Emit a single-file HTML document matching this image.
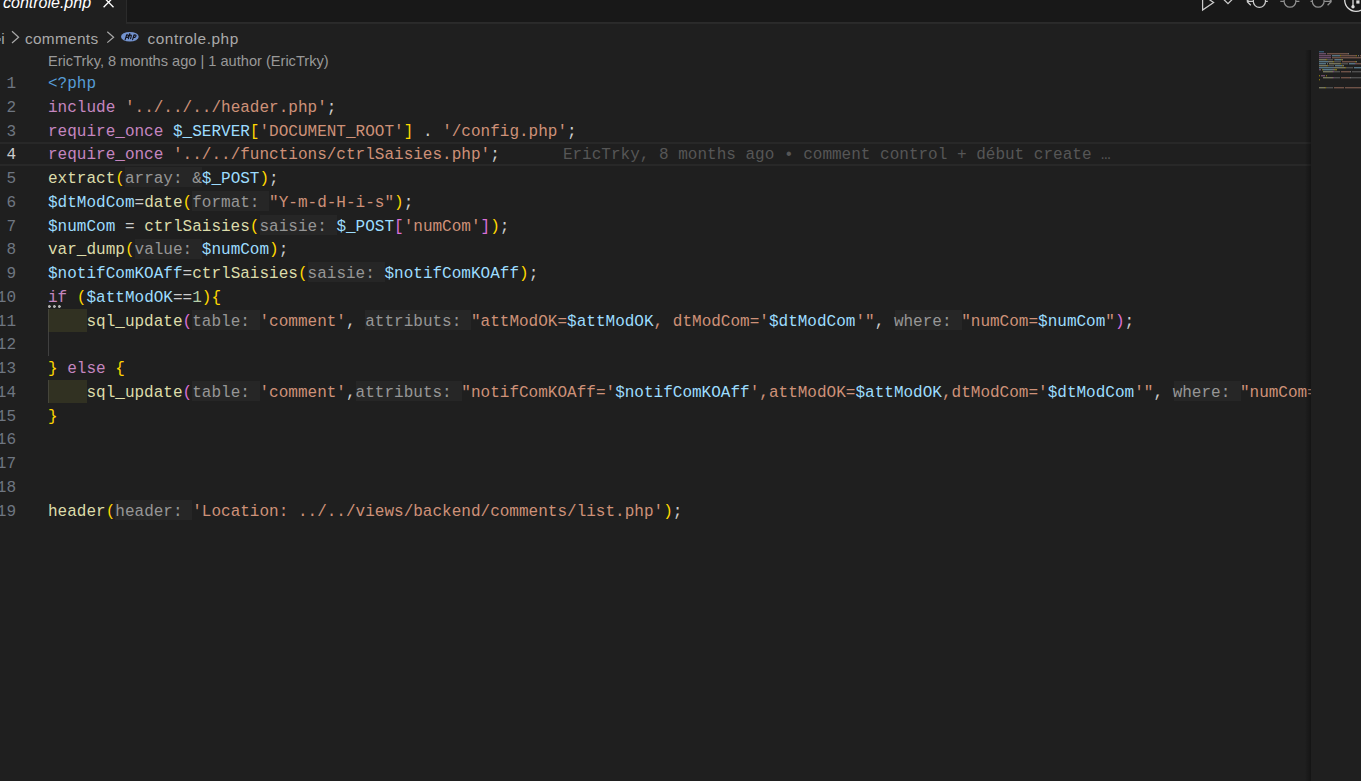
<!DOCTYPE html>
<html><head><meta charset="utf-8">
<style>
*{margin:0;padding:0;box-sizing:border-box}
html,body{width:1361px;height:781px;overflow:hidden;background:#1f1f1f}
body{position:relative;font-family:"Liberation Sans",sans-serif}
.ico{position:absolute;left:0;top:0;overflow:visible}
.tabs{position:absolute;left:0;top:0;width:1361px;height:23px;background:#181818}
.tabline{position:absolute;left:126px;top:22px;width:1235px;height:2px;background:linear-gradient(#2b2b2b 0 1px,#292929 1px 2px)}
.tab{position:absolute;left:0;top:0;width:127px;height:23px;background:#1f1f1f;border-right:1px solid #2b2b2b}
.tabtxt{position:absolute;left:3px;top:-6.8px;font-size:16px;font-style:italic;color:#ffffff;white-space:nowrap;line-height:20px}
.bc{position:absolute;top:29.5px;font-size:15.4px;color:#a9a9a9;white-space:nowrap;line-height:18px}
.codelens{position:absolute;left:48px;top:52px;font-size:14.6px;color:#999999;white-space:nowrap;line-height:18px}
.ln{position:absolute;left:-84px;width:100px;text-align:right;font-family:"Liberation Mono",monospace;font-size:16.03px;line-height:20.0px;white-space:nowrap}
.editor{position:absolute;left:0;top:47px;width:1311px;height:734px;overflow:hidden}
.editor > div{margin-top:-47px}
.cl{position:absolute;left:48px;font-family:"Liberation Mono",monospace;font-size:16.03px;line-height:20.0px;white-space:pre;color:#cccccc}
.h{color:#969696}
.hintbg{position:absolute;height:20px;background:#262626}
.ind{position:absolute;height:22.9px;background:#313122;border-left:1px solid #45453a}
.guide{position:absolute;left:48px;width:1px;background:#404040}
.hl{position:absolute;left:0;top:142px;width:1311px;height:24px;border-top:2px solid #282828;border-bottom:2px solid #282828}
.blame{position:absolute;left:562.9px;font-family:"Liberation Mono",monospace;font-size:16.03px;line-height:20.0px;color:#565656;white-space:pre}
.shadow{position:absolute;left:1305px;top:50px;width:6px;height:731px;background:linear-gradient(to right,rgba(0,0,0,0),rgba(0,0,0,0.35))}
.mm{position:absolute;left:1319px;top:51px;width:42px;height:60px;overflow:hidden;opacity:.45}
.mm i{position:absolute;height:2px;display:block;border-bottom:0.5px solid rgba(31,31,31,.6)}
.dots{position:absolute;left:47.8px;top:304.6px;width:13.5px;height:3.3px;background:radial-gradient(circle at 1.4px 1.65px,#b0b0b0 0 1.2px,rgba(176,176,176,0) 1.7px) 0 0/5px 3.3px repeat-x}
</style></head><body>
<div class="tabs"></div>
<div class="tabline"></div>
<div class="tab"><div class="tabtxt">controle.php</div></div>
<svg class="ico" width="1361" height="23" viewBox="0 0 1361 23">
<g fill="none" stroke="#ffffff" stroke-width="1.3">
<path d="M103.6 7.2 L113.5 -2.8 M113.5 7.2 L103.6 -2.8"/>
</g>
<g fill="none" stroke="#cccccc" stroke-width="1.25" stroke-linejoin="miter">
<path d="M1202.6 -5 L1213.6 2.5 L1202.6 10 Z"/>
<path d="M1223.8 -0.5 L1228 3.7 L1232.2 -0.5"/>
<circle cx="1259.4" cy="1.3" r="6.1"/>
<path d="M1246.8 1.3 H1253.3 M1265.5 1.3 H1267.8 M1246.8 1.3 L1250.8 -2.7 M1246.8 1.3 L1250.8 5.3"/>
</g>
<g fill="none" stroke="#8f8f8f" stroke-width="1.25">
<circle cx="1290" cy="1.3" r="5.9"/>
<path d="M1280.3 1.3 H1284.1 M1295.9 1.3 H1299.4"/>
<circle cx="1318.2" cy="1.3" r="5.9"/>
<path d="M1310.5 1.3 H1312.3 M1324.1 1.3 H1331.6 M1331.6 1.3 L1327.6 -2.7 M1331.6 1.3 L1327.6 5.3"/>
</g>
<g fill="none" stroke="#dddddd" stroke-width="1.3">
<circle cx="1356" cy="0" r="11.3"/>
<path d="M1353 -2 V6"/>
</g>
<g fill="#dddddd">
<circle cx="1353" cy="6.8" r="1.7"/>
<rect x="1356.3" y="0.4" width="3.2" height="3.2"/>
</g>
</svg>
<div class="bc" style="left:1.3px">i</div><div style="position:absolute;left:0;top:38px;width:1px;height:3px;background:#6a6a6a"></div>
<div class="bc" style="left:25px;letter-spacing:0.3px">comments</div>
<div class="bc" style="left:147.5px;letter-spacing:0.55px">controle.php</div>
<svg class="ico" width="300" height="50" viewBox="0 0 300 50">
<g fill="none" stroke="#a9a9a9" stroke-width="1.2">
<path d="M12 31.3 L18.6 37.2 L12 43"/>
<path d="M107.3 31.8 L113.6 37.2 L107.3 42.6"/>
</g>
<ellipse cx="129.85" cy="36.75" rx="8.85" ry="4.85" fill="#7393cf"/>
<g fill="none" stroke="#101018" stroke-width="1.1" stroke-linecap="round">
<path d="M125.2 39.6 L126.6 34.9 M126.4 35.6 C127.4 34.6 128.9 34.7 128.6 36.0 C128.3 37.2 127.2 37.6 126.1 37.3"/>
<path d="M129.8 33.6 L128.4 38.6 M129.0 36.2 C129.8 35.0 131.6 34.6 131.3 35.8 L130.6 38.6"/>
<path d="M132.6 39.6 L134.0 34.9 M133.8 35.6 C134.8 34.6 136.3 34.7 136.0 36.0 C135.7 37.2 134.6 37.6 133.5 37.3"/>
</g>
</svg>
<div class="codelens">EricTrky, 8 months ago | 1 author (EricTrky)</div>
<div class="hl"></div>
<div class="guide" style="top:332.00px;height:23.75px"></div>
<div class="editor"><div style="position:absolute;left:0;top:0;width:1306px;height:781px">
<div class="ln" style="top:74.03px;color:#6E7681">1</div>
<div class="cl" style="top:74.03px"><span style="color:#569CD6">&lt;?php</span></div>
<div class="ln" style="top:97.78px;color:#6E7681">2</div>
<div class="cl" style="top:97.78px"><span style="color:#C586C0">include</span><span style="color:#CCCCCC">&nbsp;</span><span style="color:#CE9178">&#x27;../../../header.php&#x27;</span><span style="color:#CCCCCC">;</span></div>
<div class="ln" style="top:121.53px;color:#6E7681">3</div>
<div class="cl" style="top:121.53px"><span style="color:#C586C0">require_once</span><span style="color:#CCCCCC">&nbsp;</span><span style="color:#9CDCFE">$_SERVER</span><span style="color:#FFD700">[</span><span style="color:#CE9178">&#x27;DOCUMENT_ROOT&#x27;</span><span style="color:#FFD700">]</span><span style="color:#CCCCCC">&nbsp;.&nbsp;</span><span style="color:#CE9178">&#x27;/config.php&#x27;</span><span style="color:#CCCCCC">;</span></div>
<div class="ln" style="top:145.28px;color:#CCCCCC">4</div>
<div class="cl" style="top:145.28px"><span style="color:#C586C0">require_once</span><span style="color:#CCCCCC">&nbsp;</span><span style="color:#CE9178">&#x27;../../functions/ctrlSaisies.php&#x27;</span><span style="color:#CCCCCC">;</span></div>
<div class="ln" style="top:169.03px;color:#6E7681">5</div>
<div class="hintbg" style="top:167.25px;left:124.96px;width:76.96px"></div>
<div class="cl" style="top:169.03px"><span style="color:#DCDCAA">extract</span><span style="color:#FFD700">(</span><span class="h">array:&nbsp;&amp;</span><span style="color:#9CDCFE">$_POST</span><span style="color:#FFD700">)</span><span style="color:#CCCCCC">;</span></div>
<div class="ln" style="top:192.78px;color:#6E7681">6</div>
<div class="hintbg" style="top:191.00px;left:192.30px;width:76.96px"></div>
<div class="cl" style="top:192.78px"><span style="color:#9CDCFE">$dtModCom</span><span style="color:#CCCCCC">=</span><span style="color:#DCDCAA">date</span><span style="color:#FFD700">(</span><span class="h">format:&nbsp;</span><span style="color:#CE9178">&quot;Y-m-d-H-i-s&quot;</span><span style="color:#FFD700">)</span><span style="color:#CCCCCC">;</span></div>
<div class="ln" style="top:216.53px;color:#6E7681">7</div>
<div class="hintbg" style="top:214.75px;left:259.64px;width:76.96px"></div>
<div class="cl" style="top:216.53px"><span style="color:#9CDCFE">$numCom</span><span style="color:#CCCCCC">&nbsp;=&nbsp;</span><span style="color:#DCDCAA">ctrlSaisies</span><span style="color:#FFD700">(</span><span class="h">saisie:&nbsp;</span><span style="color:#9CDCFE">$_POST</span><span style="color:#DA70D6">[</span><span style="color:#CE9178">&#x27;numCom&#x27;</span><span style="color:#DA70D6">]</span><span style="color:#FFD700">)</span><span style="color:#CCCCCC">;</span></div>
<div class="ln" style="top:240.28px;color:#6E7681">8</div>
<div class="hintbg" style="top:238.50px;left:134.58px;width:67.34px"></div>
<div class="cl" style="top:240.28px"><span style="color:#DCDCAA">var_dump</span><span style="color:#FFD700">(</span><span class="h">value:&nbsp;</span><span style="color:#9CDCFE">$numCom</span><span style="color:#FFD700">)</span><span style="color:#CCCCCC">;</span></div>
<div class="ln" style="top:264.03px;color:#6E7681">9</div>
<div class="hintbg" style="top:262.25px;left:307.74px;width:76.96px"></div>
<div class="cl" style="top:264.03px"><span style="color:#9CDCFE">$notifComKOAff</span><span style="color:#CCCCCC">=</span><span style="color:#DCDCAA">ctrlSaisies</span><span style="color:#FFD700">(</span><span class="h">saisie:&nbsp;</span><span style="color:#9CDCFE">$notifComKOAff</span><span style="color:#FFD700">)</span><span style="color:#CCCCCC">;</span></div>
<div class="ln" style="top:287.78px;color:#6E7681">10</div>
<div class="cl" style="top:287.78px"><span style="color:#C586C0">if</span><span style="color:#CCCCCC">&nbsp;</span><span style="color:#FFD700">(</span><span style="color:#9CDCFE">$attModOK</span><span style="color:#CCCCCC">==</span><span style="color:#B5CEA8">1</span><span style="color:#FFD700">)</span><span style="color:#FFD700">{</span></div>
<div class="ln" style="top:311.53px;color:#6E7681">11</div>
<div class="ind" style="top:309.00px;left:47.70px;width:39.28px"></div>
<div class="hintbg" style="top:309.75px;left:192.30px;width:67.34px"></div>
<div class="hintbg" style="top:309.75px;left:365.46px;width:105.82px"></div>
<div class="hintbg" style="top:309.75px;left:894.56px;width:67.34px"></div>
<div class="cl" style="top:311.53px">&nbsp;&nbsp;&nbsp;&nbsp;<span style="color:#DCDCAA">sql_update</span><span style="color:#DA70D6">(</span><span class="h">table:&nbsp;</span><span style="color:#CE9178">&#x27;comment&#x27;</span><span style="color:#CCCCCC">,&nbsp;</span><span class="h">attributs:&nbsp;</span><span style="color:#CE9178">&quot;attModOK=</span><span style="color:#9CDCFE">$attModOK</span><span style="color:#CE9178">,&nbsp;dtModCom=&#x27;</span><span style="color:#9CDCFE">$dtModCom</span><span style="color:#CE9178">&#x27;&quot;</span><span style="color:#CCCCCC">,&nbsp;</span><span class="h">where:&nbsp;</span><span style="color:#CE9178">&quot;numCom=</span><span style="color:#9CDCFE">$numCom</span><span style="color:#CE9178">&quot;</span><span style="color:#DA70D6">)</span><span style="color:#CCCCCC">;</span></div>
<div class="ln" style="top:335.28px;color:#6E7681">12</div>
<div class="cl" style="top:335.28px"></div>
<div class="ln" style="top:359.03px;color:#6E7681">13</div>
<div class="cl" style="top:359.03px"><span style="color:#FFD700">}</span><span style="color:#CCCCCC">&nbsp;</span><span style="color:#C586C0">else</span><span style="color:#CCCCCC">&nbsp;</span><span style="color:#FFD700">{</span></div>
<div class="ln" style="top:382.78px;color:#6E7681">14</div>
<div class="ind" style="top:380.25px;left:47.70px;width:39.28px"></div>
<div class="hintbg" style="top:381.00px;left:192.30px;width:67.34px"></div>
<div class="hintbg" style="top:381.00px;left:355.84px;width:105.82px"></div>
<div class="hintbg" style="top:381.00px;left:1173.54px;width:67.34px"></div>
<div class="cl" style="top:382.78px">&nbsp;&nbsp;&nbsp;&nbsp;<span style="color:#DCDCAA">sql_update</span><span style="color:#DA70D6">(</span><span class="h">table:&nbsp;</span><span style="color:#CE9178">&#x27;comment&#x27;</span><span style="color:#CCCCCC">,</span><span class="h">attributs:&nbsp;</span><span style="color:#CE9178">&quot;notifComKOAff=&#x27;</span><span style="color:#9CDCFE">$notifComKOAff</span><span style="color:#CE9178">&#x27;</span><span style="color:#CE9178">,attModOK=</span><span style="color:#9CDCFE">$attModOK</span><span style="color:#CE9178">,dtModCom=&#x27;</span><span style="color:#9CDCFE">$dtModCom</span><span style="color:#CE9178">&#x27;&quot;</span><span style="color:#CCCCCC">,&nbsp;</span><span class="h">where:&nbsp;</span><span style="color:#CE9178">&quot;numCom=</span><span style="color:#9CDCFE">$numCom</span><span style="color:#CE9178">&quot;</span><span style="color:#DA70D6">)</span><span style="color:#CCCCCC">;</span></div>
<div class="ln" style="top:406.53px;color:#6E7681">15</div>
<div class="cl" style="top:406.53px"><span style="color:#FFD700">}</span></div>
<div class="ln" style="top:430.28px;color:#6E7681">16</div>
<div class="cl" style="top:430.28px"></div>
<div class="ln" style="top:454.03px;color:#6E7681">17</div>
<div class="cl" style="top:454.03px"></div>
<div class="ln" style="top:477.78px;color:#6E7681">18</div>
<div class="cl" style="top:477.78px"></div>
<div class="ln" style="top:501.53px;color:#6E7681">19</div>
<div class="hintbg" style="top:499.75px;left:115.34px;width:76.96px"></div>
<div class="cl" style="top:501.53px"><span style="color:#DCDCAA">header</span><span style="color:#FFD700">(</span><span class="h">header:&nbsp;</span><span style="color:#CE9178">&#x27;Location:&nbsp;../../views/backend/comments/list.php&#x27;</span><span style="color:#FFD700">)</span><span style="color:#CCCCCC">;</span></div>
<div class="blame" style="top:145.28px">EricTrky, 8 months ago • comment control + début create …</div>
</div></div>
<div class="dots"></div>
<div class="shadow"></div>
<div class="mm"><i style="left:0px;top:0px;width:5.0px;background:#569CD6"></i><i style="left:0px;top:2px;width:7.0px;background:#C586C0"></i><i style="left:8px;top:2px;width:21.0px;background:#CE9178"></i><i style="left:29px;top:2px;width:1.0px;background:#CCCCCC"></i><i style="left:0px;top:4px;width:12.0px;background:#C586C0"></i><i style="left:13px;top:4px;width:8.0px;background:#9CDCFE"></i><i style="left:21px;top:4px;width:1.0px;background:#FFD700"></i><i style="left:22px;top:4px;width:15.0px;background:#CE9178"></i><i style="left:37px;top:4px;width:1.0px;background:#FFD700"></i><i style="left:39px;top:4px;width:1.0px;background:#CCCCCC"></i><i style="left:41px;top:4px;width:13.0px;background:#CE9178"></i><i style="left:54px;top:4px;width:1.0px;background:#CCCCCC"></i><i style="left:0px;top:6px;width:12.0px;background:#C586C0"></i><i style="left:13px;top:6px;width:33.0px;background:#CE9178"></i><i style="left:46px;top:6px;width:1.0px;background:#CCCCCC"></i><i style="left:0px;top:8px;width:7.0px;background:#DCDCAA"></i><i style="left:7px;top:8px;width:1.0px;background:#FFD700"></i><i style="left:8px;top:8px;width:6.0px;background:#8a8a8a"></i><i style="left:15px;top:8px;width:1.0px;background:#8a8a8a"></i><i style="left:16px;top:8px;width:6.0px;background:#9CDCFE"></i><i style="left:22px;top:8px;width:1.0px;background:#FFD700"></i><i style="left:23px;top:8px;width:1.0px;background:#CCCCCC"></i><i style="left:0px;top:10px;width:9.0px;background:#9CDCFE"></i><i style="left:9px;top:10px;width:1.0px;background:#CCCCCC"></i><i style="left:10px;top:10px;width:4.0px;background:#DCDCAA"></i><i style="left:14px;top:10px;width:1.0px;background:#FFD700"></i><i style="left:15px;top:10px;width:7.0px;background:#8a8a8a"></i><i style="left:23px;top:10px;width:13.0px;background:#CE9178"></i><i style="left:36px;top:10px;width:1.0px;background:#FFD700"></i><i style="left:37px;top:10px;width:1.0px;background:#CCCCCC"></i><i style="left:0px;top:12px;width:7.0px;background:#9CDCFE"></i><i style="left:8px;top:12px;width:1.0px;background:#CCCCCC"></i><i style="left:10px;top:12px;width:11.0px;background:#DCDCAA"></i><i style="left:21px;top:12px;width:1.0px;background:#FFD700"></i><i style="left:22px;top:12px;width:7.0px;background:#8a8a8a"></i><i style="left:30px;top:12px;width:6.0px;background:#9CDCFE"></i><i style="left:36px;top:12px;width:1.0px;background:#DA70D6"></i><i style="left:37px;top:12px;width:8.0px;background:#CE9178"></i><i style="left:45px;top:12px;width:1.0px;background:#DA70D6"></i><i style="left:46px;top:12px;width:1.0px;background:#FFD700"></i><i style="left:47px;top:12px;width:1.0px;background:#CCCCCC"></i><i style="left:0px;top:14px;width:8.0px;background:#DCDCAA"></i><i style="left:8px;top:14px;width:1.0px;background:#FFD700"></i><i style="left:9px;top:14px;width:6.0px;background:#8a8a8a"></i><i style="left:16px;top:14px;width:7.0px;background:#9CDCFE"></i><i style="left:23px;top:14px;width:1.0px;background:#FFD700"></i><i style="left:24px;top:14px;width:1.0px;background:#CCCCCC"></i><i style="left:0px;top:16px;width:14.0px;background:#9CDCFE"></i><i style="left:14px;top:16px;width:1.0px;background:#CCCCCC"></i><i style="left:15px;top:16px;width:11.0px;background:#DCDCAA"></i><i style="left:26px;top:16px;width:1.0px;background:#FFD700"></i><i style="left:27px;top:16px;width:7.0px;background:#8a8a8a"></i><i style="left:35px;top:16px;width:14.0px;background:#9CDCFE"></i><i style="left:49px;top:16px;width:1.0px;background:#FFD700"></i><i style="left:50px;top:16px;width:1.0px;background:#CCCCCC"></i><i style="left:0px;top:18px;width:2.0px;background:#C586C0"></i><i style="left:3px;top:18px;width:1.0px;background:#FFD700"></i><i style="left:4px;top:18px;width:9.0px;background:#9CDCFE"></i><i style="left:13px;top:18px;width:2.0px;background:#CCCCCC"></i><i style="left:15px;top:18px;width:1.0px;background:#B5CEA8"></i><i style="left:16px;top:18px;width:1.0px;background:#FFD700"></i><i style="left:17px;top:18px;width:1.0px;background:#FFD700"></i><i style="left:4px;top:20px;width:10.0px;background:#DCDCAA"></i><i style="left:14px;top:20px;width:1.0px;background:#DA70D6"></i><i style="left:15px;top:20px;width:6.0px;background:#8a8a8a"></i><i style="left:22px;top:20px;width:9.0px;background:#CE9178"></i><i style="left:31px;top:20px;width:1.0px;background:#CCCCCC"></i><i style="left:33px;top:20px;width:10.0px;background:#8a8a8a"></i><i style="left:44px;top:20px;width:10.0px;background:#CE9178"></i><i style="left:54px;top:20px;width:9.0px;background:#9CDCFE"></i><i style="left:63px;top:20px;width:1.0px;background:#CE9178"></i><i style="left:65px;top:20px;width:10.0px;background:#CE9178"></i><i style="left:75px;top:20px;width:9.0px;background:#9CDCFE"></i><i style="left:84px;top:20px;width:2.0px;background:#CE9178"></i><i style="left:86px;top:20px;width:1.0px;background:#CCCCCC"></i><i style="left:88px;top:20px;width:6.0px;background:#8a8a8a"></i><i style="left:95px;top:20px;width:8.0px;background:#CE9178"></i><i style="left:103px;top:20px;width:7.0px;background:#9CDCFE"></i><i style="left:110px;top:20px;width:1.0px;background:#CE9178"></i><i style="left:111px;top:20px;width:1.0px;background:#DA70D6"></i><i style="left:112px;top:20px;width:1.0px;background:#CCCCCC"></i><i style="left:0px;top:24px;width:1.0px;background:#FFD700"></i><i style="left:2px;top:24px;width:4.0px;background:#C586C0"></i><i style="left:7px;top:24px;width:1.0px;background:#FFD700"></i><i style="left:4px;top:26px;width:10.0px;background:#DCDCAA"></i><i style="left:14px;top:26px;width:1.0px;background:#DA70D6"></i><i style="left:15px;top:26px;width:6.0px;background:#8a8a8a"></i><i style="left:22px;top:26px;width:9.0px;background:#CE9178"></i><i style="left:31px;top:26px;width:1.0px;background:#CCCCCC"></i><i style="left:32px;top:26px;width:10.0px;background:#8a8a8a"></i><i style="left:43px;top:26px;width:16.0px;background:#CE9178"></i><i style="left:59px;top:26px;width:14.0px;background:#9CDCFE"></i><i style="left:73px;top:26px;width:1.0px;background:#CE9178"></i><i style="left:74px;top:26px;width:10.0px;background:#CE9178"></i><i style="left:84px;top:26px;width:9.0px;background:#9CDCFE"></i><i style="left:93px;top:26px;width:11.0px;background:#CE9178"></i><i style="left:104px;top:26px;width:9.0px;background:#9CDCFE"></i><i style="left:113px;top:26px;width:2.0px;background:#CE9178"></i><i style="left:115px;top:26px;width:1.0px;background:#CCCCCC"></i><i style="left:117px;top:26px;width:6.0px;background:#8a8a8a"></i><i style="left:124px;top:26px;width:8.0px;background:#CE9178"></i><i style="left:132px;top:26px;width:7.0px;background:#9CDCFE"></i><i style="left:139px;top:26px;width:1.0px;background:#CE9178"></i><i style="left:140px;top:26px;width:1.0px;background:#DA70D6"></i><i style="left:141px;top:26px;width:1.0px;background:#CCCCCC"></i><i style="left:0px;top:28px;width:1.0px;background:#FFD700"></i><i style="left:0px;top:36px;width:6.0px;background:#DCDCAA"></i><i style="left:6px;top:36px;width:1.0px;background:#FFD700"></i><i style="left:7px;top:36px;width:7.0px;background:#8a8a8a"></i><i style="left:15px;top:36px;width:10.0px;background:#CE9178"></i><i style="left:26px;top:36px;width:38.0px;background:#CE9178"></i><i style="left:64px;top:36px;width:1.0px;background:#FFD700"></i><i style="left:65px;top:36px;width:1.0px;background:#CCCCCC"></i></div>
</body></html>
